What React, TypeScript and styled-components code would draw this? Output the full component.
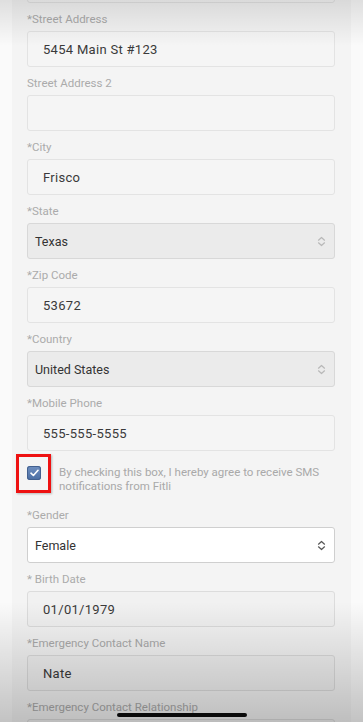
import styled, { createGlobalStyle } from 'styled-components'

const GlobalStyle = createGlobalStyle`
  html, body {
    margin: 0;
    padding: 0;
    background: #fafafa;
    font-family: Roboto, "Noto Sans", sans-serif;
  }
  body {
    height: 722px;
    overflow: hidden;
  }
`

type Variant = 'plain' | 'disabled' | 'active'

interface FieldData {
  label: string
  value?: string
  select?: Variant
  filled?: boolean
}

const fields: FieldData[] = [
  { label: '*Street Address', value: '5454 Main St #123' },
  { label: 'Street Address 2', value: '' },
  { label: '*City', value: 'Frisco' },
  { label: '*State', value: 'Texas', select: 'disabled' },
  { label: '*Zip Code', value: '53672' },
  { label: '*Country', value: 'United States', select: 'disabled' },
  { label: '*Mobile Phone', value: '555-555-5555' },
]

const moreFields: FieldData[] = [
  { label: '*Gender', value: 'Female', select: 'active' },
  { label: '* Birth Date', value: '01/01/1979', filled: true },
  { label: '*Emergency Contact Name', value: 'Nate', filled: true },
  { label: '*Emergency Contact Relationship', value: '', filled: true },
]

function Chevrons({ dark }: { dark?: boolean }) {
  const c = dark ? '#555' : '#b8b8b8'
  return (
    <svg width="9" height="11" viewBox="0 0 9 11" fill="none">
      <path d="M1.5 4.2 L4.5 1.5 L7.5 4.2" stroke={c} strokeWidth="1.2" strokeLinecap="round" strokeLinejoin="round" />
      <path d="M1.5 6.8 L4.5 9.5 L7.5 6.8" stroke={c} strokeWidth="1.2" strokeLinecap="round" strokeLinejoin="round" />
    </svg>
  )
}

function Field({ label, value, select, filled }: FieldData) {
  if (select) {
    return (
      <Group>
        <Label>{label}</Label>
        <SelectBox $variant={select}>
          <SelectText>{value}</SelectText>
          <Chevrons dark={select === 'active'} />
        </SelectBox>
      </Group>
    )
  }
  return (
    <Group>
      <Label>{label}</Label>
      <InputBox $filled={filled}>{value}</InputBox>
    </Group>
  )
}

export default function App() {
  return (
    <>
      <GlobalStyle />
      <Page>
        <Panel>
          <Form>
            {/* bottom of the field scrolled off above */}
            <PrevInput />
            {fields.map((f) => (
              <Field key={f.label} {...f} />
            ))}
            <ConsentRow>
              <CheckWrap>
                <CheckBox>
                  <svg width="9" height="8" viewBox="0 0 9 8" fill="none">
                    <path d="M1 4.2 L3.4 6.5 L8 1.3" stroke="#fff" strokeWidth="1.6" strokeLinecap="round" strokeLinejoin="round" />
                  </svg>
                </CheckBox>
                <Highlight />
              </CheckWrap>
              <ConsentText>
                By checking this box, I hereby agree to receive SMS notifications from Fitli
              </ConsentText>
            </ConsentRow>
            {moreFields.map((f) => (
              <Field key={f.label} {...f} />
            ))}
          </Form>
        </Panel>
        <TopShade />
        <BottomShade />
        <HomeBar />
      </Page>
    </>
  )
}

const Page = styled.div`
  position: relative;
  height: 722px;
  overflow: hidden;
  background: #fafafa;
`

const Panel = styled.div`
  margin: 0 12px;
  background: #f4f4f4;
  min-height: 100%;
  padding: 0 16px 0 15px;
`

const Form = styled.div`
  display: flex;
  flex-direction: column;
`

const Group = styled.div`
  display: flex;
  flex-direction: column;
  margin-bottom: 7px;
`

const Label = styled.div`
  height: 18px;
  line-height: 18px;
  margin-bottom: 3px;
  font-size: 11.5px;
  color: #ababab;
`

const InputBox = styled.div<{ $filled?: boolean }>`
  box-sizing: border-box;
  height: 36px;
  display: flex;
  align-items: center;
  padding: 0 15px;
  background: ${(p) => (p.$filled ? '#f1f1f1' : '#f5f5f5')};
  border: 1px solid ${(p) => (p.$filled ? '#dcdcdc' : '#e3e3e3')};
  border-radius: 3px;
  font-size: 13px;
  letter-spacing: 0.3px;
  color: #3a3a3a;
`

const PrevInput = styled(InputBox)`
  margin-top: -33px;
  margin-bottom: 7px;
`

const SelectBox = styled.div<{ $variant: Variant }>`
  box-sizing: border-box;
  height: 36px;
  display: flex;
  align-items: center;
  justify-content: space-between;
  padding: 0 8px 0 7px;
  background: ${(p) => (p.$variant === 'active' ? '#ffffff' : '#ebebeb')};
  border: 1px solid ${(p) => (p.$variant === 'active' ? '#cfcfcf' : '#d8d8d8')};
  border-radius: 3px;
  font-size: 12.5px;
  color: #333;
`

const SelectText = styled.span``

const ConsentRow = styled.div`
  display: flex;
  align-items: flex-start;
  margin: 7px 0 13px 0;
`

const CheckWrap = styled.div`
  position: relative;
  width: 32px;
  flex-shrink: 0;
  padding-top: 1px;
`

const CheckBox = styled.div`
  width: 14px;
  height: 14px;
  border-radius: 3px;
  background: linear-gradient(#6f8fc0, #4b6ea3);
  box-shadow: inset 0 0 0 1px #42608f;
  display: flex;
  align-items: center;
  justify-content: center;
`

const Highlight = styled.div`
  position: absolute;
  left: -11px;
  top: -11px;
  width: 35px;
  height: 39px;
  box-sizing: border-box;
  border: 3px solid #ee1111;
  box-shadow: 1px 1px 2px rgba(0, 0, 0, 0.25);
`

const ConsentText = styled.div`
  font-size: 11.5px;
  line-height: 14px;
  color: #a9a9a9;
`

const TopShade = styled.div`
  position: absolute;
  top: 0;
  left: 0;
  right: 0;
  height: 46px;
  background: linear-gradient(rgba(0, 0, 0, 0.11), rgba(0, 0, 0, 0));
  pointer-events: none;
`

const BottomShade = styled.div`
  position: absolute;
  bottom: 0;
  left: 0;
  right: 0;
  height: 120px;
  background: linear-gradient(rgba(0, 0, 0, 0), rgba(0, 0, 0, 0.22));
  pointer-events: none;
`

const HomeBar = styled.div`
  position: absolute;
  bottom: 5px;
  left: 117px;
  width: 130px;
  height: 4px;
  border-radius: 2px;
  background: #0a0a0a;
`
